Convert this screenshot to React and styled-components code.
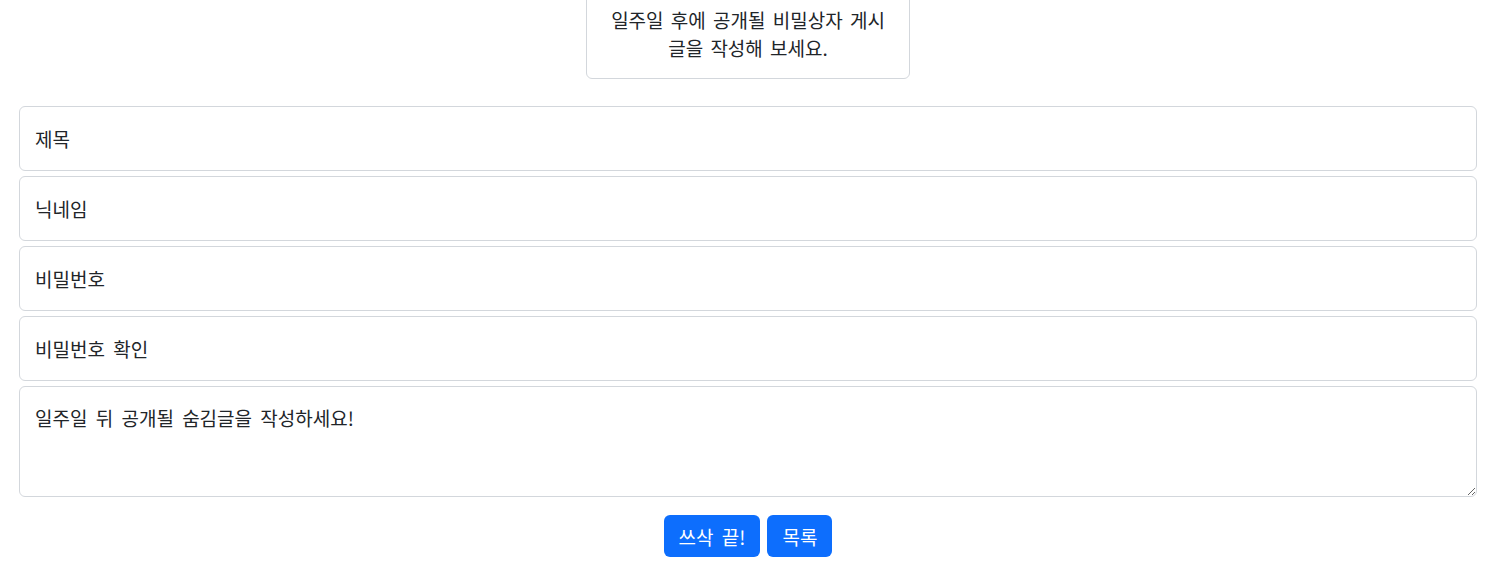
import React from 'react';
import styled, { createGlobalStyle } from 'styled-components';

const Global = createGlobalStyle`
  body {
    margin: 0;
    background: #fff;
    color: #212529;
    font-family: "Noto Sans CJK KR", "Noto Sans", sans-serif;
  }
`;

const Page = styled.main`
  padding: 0 16px 0 19px;
  display: flex;
  flex-direction: column;
  align-items: center;
`;

const Notice = styled.div`
  margin-top: -11px;
  width: 324px;
  box-sizing: border-box;
  padding: 16px 18px;
  border: 1px solid #d3d7dc;
  border-radius: 6px;
  text-align: center;
  font-size: 19px;
  line-height: 28px;
  word-spacing: 3px;
`;

const Form = styled.form`
  margin-top: 27px;
  width: 100%;
  display: flex;
  flex-direction: column;
  gap: 5px;
`;

const Field = styled.input`
  box-sizing: border-box;
  width: 100%;
  height: 65px;
  padding: 0 15px;
  border: 1px solid #d3d7dc;
  border-radius: 6px;
  font: inherit;
  font-size: 19px;
  word-spacing: 4px;
  color: #212529;
  background: #fff;
  outline: none;

  &::placeholder {
    color: #212529;
    opacity: 1;
  }
`;

const Body = styled.textarea`
  box-sizing: border-box;
  width: 100%;
  height: 111px;
  padding: 17px 15px;
  border: 1px solid #d3d7dc;
  border-radius: 6px;
  font: inherit;
  font-size: 19px;
  word-spacing: 4px;
  line-height: 28px;
  color: #212529;
  resize: vertical;
  outline: none;

  &::placeholder {
    color: #212529;
    opacity: 1;
  }
`;

const Actions = styled.div`
  margin-top: 13px;
  display: flex;
  justify-content: center;
  gap: 7px;
`;

const Button = styled.button`
  height: 42px;
  padding: 0 15px;
  border: none;
  border-radius: 6px;
  background: #0d6efd;
  color: #fff;
  font: inherit;
  font-size: 19px;
  word-spacing: 4px;
  cursor: pointer;
`;

export default function App() {
  return (
    <Page>
      <Global />
      <Notice>일주일 후에 공개될 비밀상자 게시글을 작성해 보세요.</Notice>
      <Form onSubmit={e => e.preventDefault()}>
        <Field placeholder="제목" />
        <Field placeholder="닉네임" />
        <Field type="password" placeholder="비밀번호" />
        <Field type="password" placeholder="비밀번호 확인" />
        <Body placeholder="일주일 뒤 공개될 숨김글을 작성하세요!" />
        <Actions>
          <Button type="submit">쓰삭 끝!</Button>
          <Button type="button">목록</Button>
        </Actions>
      </Form>
    </Page>
  );
}
